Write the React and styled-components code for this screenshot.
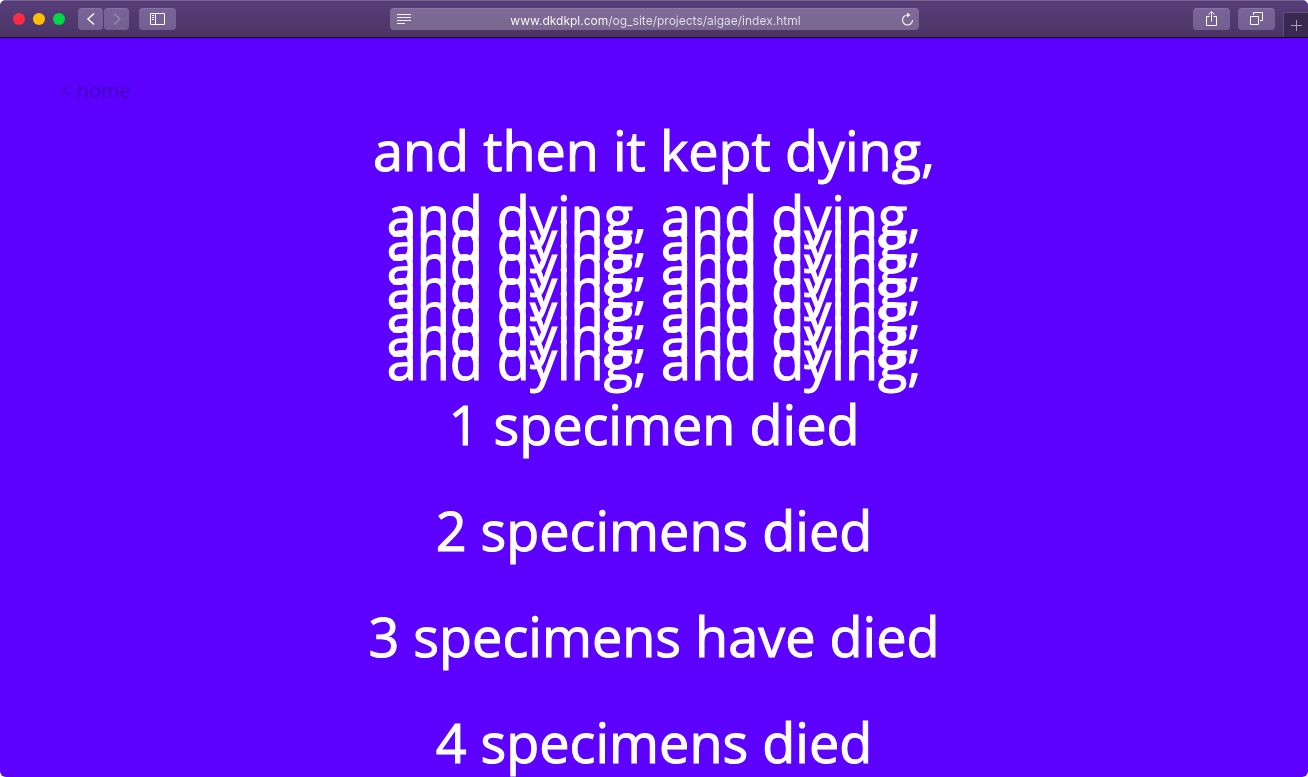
import React from "react";
import styled, { createGlobalStyle } from "styled-components";

const GlobalStyle = createGlobalStyle`
  *, *::before, *::after { box-sizing: border-box; }
  body { margin: 0; background: #fff; }
`;

const BrowserWindow = styled.div`
  display: flex;
  flex-direction: column;
  height: 100vh;
  overflow: hidden;
  border-radius: 6px;
  background: #5c00ff;
`;

const Toolbar = styled.header`
  display: grid;
  grid-template-columns: 1fr minmax(200px, 529px) 1fr;
  flex: none;
  height: 38px;
  background: linear-gradient(#573e79, #4a3465);
  border-top: 1px solid #78648f;
  border-bottom: 1px solid #08020f;
`;

const ToolGroup = styled.div`
  display: flex;
  align-items: center;
  padding-left: 13px;
`;

const RightGroup = styled(ToolGroup)`
  justify-content: flex-end;
  gap: 8px;
  padding-left: 0;
`;

const WindowControls = styled.div`
  display: flex;
  gap: 8px;
  margin-right: 13px;
`;

const WindowDot = styled.button`
  width: 12px;
  height: 12px;
  padding: 0;
  border: 0;
  border-radius: 50%;
  background: ${(p) => p.$color};
`;

const HistoryButtons = styled.div`
  display: flex;
  gap: 1px;
  margin-right: 10px;
`;

const ToolButton = styled.button`
  display: flex;
  align-items: center;
  justify-content: center;
  width: ${(p) => (p.$narrow ? 25 : 37)}px;
  height: 22px;
  padding: 0 0 2px;
  border: 0;
  border-top: 1px solid #86739f;
  border-radius: 4px;
  background: linear-gradient(#79649a, #745f90);
  color: ${(p) => (p.disabled ? "#9c8bb3" : "#fbf8ff")};
`;

const NewTabButton = styled.button`
  display: flex;
  align-items: center;
  justify-content: center;
  align-self: flex-end;
  width: 25px;
  height: 25px;
  padding: 0;
  border: 1px solid #655078;
  border-width: 1px 0 0 1px;
  background: #392850;
  color: #a99fb4;
`;

const AddressBar = styled.div`
  display: flex;
  align-items: center;
  align-self: center;
  height: 22px;
  padding: 0 5px 1px 7px;
  border-top: 1px solid #8a78a0;
  border-radius: 4px;
  background: linear-gradient(#7f6b98, #7a678e);
  color: #f2eef6;
`;

const AddressInput = styled.input`
  flex: 1;
  min-width: 0;
  height: 20px;
  padding: 2px 0 0;
  border: 0;
  outline: 0;
  background: linear-gradient(90deg, #fff calc(50% - 48px), #e6e0ec calc(50% - 48px));
  background-clip: text;
  color: transparent;
  font: 400 12px/18px Inter, sans-serif;
  text-align: center;
`;

const IconButton = styled.button`
  display: flex;
  padding: 0;
  border: 0;
  background: none;
  color: inherit;
`;

const Page = styled.main`
  flex: 1;
  min-height: 0;
  overflow-y: auto;
  scrollbar-width: none;
  font-family: "Open Sans", "Noto Sans", sans-serif;
`;

const SiteNav = styled.nav`
  padding: 39px 60px 0;
`;

const HomeLink = styled.a`
  display: inline-block;
  color: #4300c4;
  font-size: 20px;
  font-weight: 500;
  line-height: 28px;
  text-decoration: none;
  vertical-align: top;
`;

const Poem = styled.article`
  padding-top: 12px;
  color: #fff;
  font-size: 54px;
  -webkit-text-stroke: 1px #fff;
  text-align: center;
`;

const Verse = styled.p`
  margin: 0 0 ${(p) => (p.$last ? 0 : 40)}px;
  line-height: 66px;
`;

const Refrain = styled.div`
  margin: -20px 0 20px;
`;

const RefrainLine = styled.p`
  margin: 0;
  line-height: 24px;
`;

const Icon = ({ width = 16, height = 16, children }) => (
  <svg
    width={width}
    height={height}
    viewBox={`0 0 ${width} ${height}`}
    fill="none"
    stroke="currentColor"
    aria-hidden="true"
  >
    {children}
  </svg>
);

const refrain = Array(7).fill("and dying, and dying,");
const deaths = [
  "1 specimen died",
  "2 specimens died",
  "3 specimens have died",
  "4 specimens died",
];

export default function App() {
  return (
    <>
      <GlobalStyle />
      <BrowserWindow>
        <Toolbar>
          <ToolGroup>
            <WindowControls>
              <WindowDot $color="#ff2b43" aria-label="Close" />
              <WindowDot $color="#ffbf00" aria-label="Minimize" />
              <WindowDot $color="#00d846" aria-label="Zoom" />
            </WindowControls>
            <HistoryButtons>
              <ToolButton $narrow aria-label="Back">
                <Icon>
                  <path d="M11 2.5 5 8l6 5.500" strokeWidth="1.5" />
                </Icon>
              </ToolButton>
              <ToolButton $narrow disabled aria-label="Forward">
                <Icon>
                  <path d="M5 2.500 11 8l-6 5.500" strokeWidth="1.3" />
                </Icon>
              </ToolButton>
            </HistoryButtons>
            <ToolButton aria-label="Show sidebar">
              <Icon width={15} height={12}>
                <path d="M.5.5h14v11H.5zM5.500.5v11M2 2.500h2M2 4.500h2M2 6.500h2" />
              </Icon>
            </ToolButton>
          </ToolGroup>
          <AddressBar>
            <IconButton aria-label="Reader view">
              <Icon width={14} height={12}>
                <path d="M0 1.500h14M0 4.500h14M0 7.500h14M0 10.500h8" />
              </Icon>
            </IconButton>
            <AddressInput
              aria-label="Address"
              defaultValue="www.dkdkpl.com/og_site/projects/algae/index.html"
            />
            <IconButton aria-label="Reload page">
              <Icon width={13} height={14}>
                <path d="M6.500 3A5 5 0 1 0 11.500 8" strokeWidth="1.200" />
                <path d="M6 .5 9.500 3 6 5.500z" fill="currentColor" stroke="none" />
              </Icon>
            </IconButton>
          </AddressBar>
          <RightGroup>
            <ToolButton aria-label="Share">
              <Icon width={11} height={15}>
                <path d="M3.500 5.500h-3v9h10v-9h-3M5.500 10.500V1M2.500 3.500l3-3 3 3" />
              </Icon>
            </ToolButton>
            <ToolButton aria-label="Show all tabs">
              <Icon width={13} height={13}>
                <path d="M.5 4.500h8v8h-8zM3.500 3V.5h9v8H10" />
              </Icon>
            </ToolButton>
            <NewTabButton aria-label="New tab">
              <Icon width={11} height={11}>
                <path d="M5.500 0v11M0 5.500h11" />
              </Icon>
            </NewTabButton>
          </RightGroup>
        </Toolbar>
        <Page>
          <SiteNav>
            <HomeLink href="#home">&lt; home</HomeLink>
          </SiteNav>
          <Poem>
            <Verse>and then it kept dying,</Verse>
            <Refrain>
              {refrain.map((line, i) => (
                <RefrainLine key={i}>{line}</RefrainLine>
              ))}
            </Refrain>
            {deaths.map((line, i) => (
              <Verse key={line} $last={i === deaths.length - 1}>
                {line}
              </Verse>
            ))}
          </Poem>
        </Page>
      </BrowserWindow>
    </>
  );
}
